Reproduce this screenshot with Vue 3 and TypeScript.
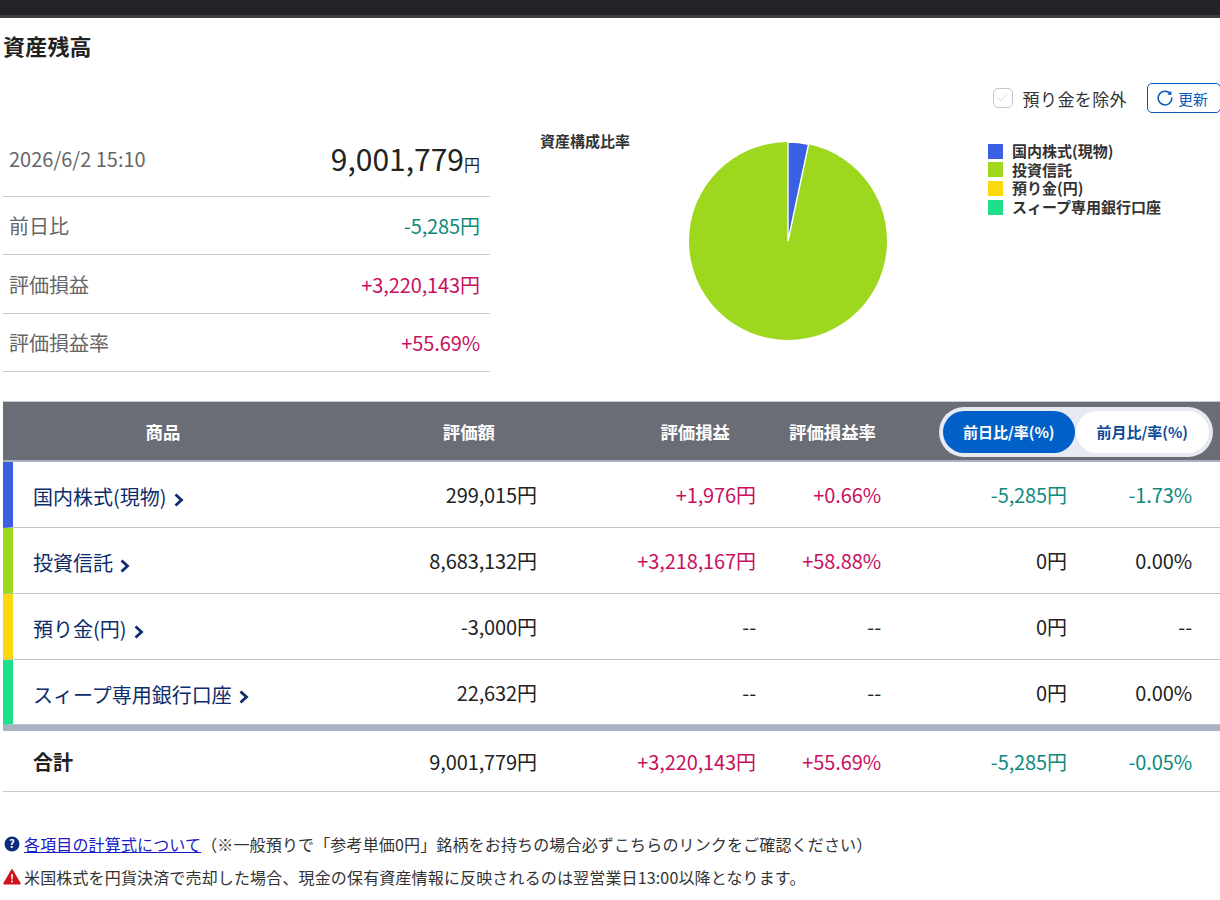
<script setup lang="ts">
import { ref } from 'vue'

type Tone = '' | 'up' | 'down'
interface Cell {
  text: string
  tone: Tone
}
interface Row {
  name: string
  color: string
  cells: Cell[]
}

const c = (text: string, tone: Tone = ''): Cell => ({ text, tone })

const excludeDeposit = ref(false)
const mode = ref<'day' | 'month'>('day')

const summary = [
  { label: '前日比', value: '-5,285円', tone: 'down' },
  { label: '評価損益', value: '+3,220,143円', tone: 'up' },
  { label: '評価損益率', value: '+55.69%', tone: 'up' },
]

const legend = [
  { name: '国内株式(現物)', color: '#3b5fe2' },
  { name: '投資信託', color: '#9dd81f' },
  { name: '預り金(円)', color: '#fcd80e' },
  { name: 'スィープ専用銀行口座', color: '#1fe08a' },
]

const rows: Row[] = [
  {
    name: '国内株式(現物)',
    color: '#3b5fe2',
    cells: [c('299,015円'), c('+1,976円', 'up'), c('+0.66%', 'up'), c('-5,285円', 'down'), c('-1.73%', 'down')],
  },
  {
    name: '投資信託',
    color: '#9dd81f',
    cells: [c('8,683,132円'), c('+3,218,167円', 'up'), c('+58.88%', 'up'), c('0円'), c('0.00%')],
  },
  {
    name: '預り金(円)',
    color: '#fcd80e',
    cells: [c('-3,000円'), c('--'), c('--'), c('0円'), c('--')],
  },
  {
    name: 'スィープ専用銀行口座',
    color: '#1fe08a',
    cells: [c('22,632円'), c('--'), c('--'), c('0円'), c('0.00%')],
  },
]

const total: Cell[] = [
  c('9,001,779円'),
  c('+3,220,143円', 'up'),
  c('+55.69%', 'up'),
  c('-5,285円', 'down'),
  c('-0.05%', 'down'),
]
</script>

<template>
  <div class="page">
    <div class="topbar"></div>
    <h1 class="title">資産残高</h1>

    <div class="tools">
      <label class="check">
        <input v-model="excludeDeposit" type="checkbox" />
        <span class="box">
          <svg width="17" height="17" viewBox="0 0 17 17" fill="none" stroke="#e6eaf2" stroke-width="1.4">
            <path d="M3.5 8.5L7 12L13.5 4.5" />
          </svg>
        </span>
        <span>預り金を除外</span>
      </label>
      <button class="refresh" type="button">
        <svg width="16" height="16" viewBox="0 0 16 16" fill="none" stroke="#0a5cb8" stroke-width="1.5">
          <path d="M13.6 4.2A6.8 6.8 0 1 0 14.8 8" stroke-linecap="round" />
          <path d="M14.3 0.8V4.8H10.3" fill="#0a5cb8" stroke="none" />
        </svg>
        更新
      </button>
    </div>

    <section class="overview">
      <div class="summary">
        <div class="sum-row sum-head">
          <span class="date">2026/6/2 15:10</span>
          <span class="amount">9,001,779<small>円</small></span>
        </div>
        <div v-for="s in summary" :key="s.label" class="sum-row">
          <span class="sum-label">{{ s.label }}</span>
          <span class="num" :class="s.tone">{{ s.value }}</span>
        </div>
      </div>

      <div class="chart">
        <p class="chart-title">資産構成比率</p>
        <svg class="pie" width="200" height="200" viewBox="0 0 200 200">
          <circle cx="100" cy="100" r="99" fill="#9dd81f" />
          <path d="M100 100L100 1A99 99 0 0 1 120.6 3.2Z" fill="#3b5fe2" stroke="#fff" stroke-width="1.4" />
        </svg>
        <ul class="legend">
          <li v-for="l in legend" :key="l.name">
            <i :style="{ background: l.color }"></i>{{ l.name }}
          </li>
        </ul>
      </div>
    </section>

    <section class="table">
      <div class="thead">
        <span class="th-name">商品</span>
        <span>評価額</span>
        <span>評価損益</span>
        <span>評価損益率</span>
        <div class="toggle">
          <button type="button" :class="{ on: mode === 'day' }" @click="mode = 'day'">前日比/率(%)</button>
          <button type="button" :class="{ on: mode === 'month' }" @click="mode = 'month'">前月比/率(%)</button>
        </div>
      </div>

      <div v-for="r in rows" :key="r.name" class="row" :style="{ borderLeftColor: r.color }">
        <a class="name" href="#">
          {{ r.name }}
          <svg width="10" height="14" viewBox="0 0 10 14" fill="none" stroke="#0d2c6b" stroke-width="2.8">
            <path d="M1.5 1.5L7.5 7L1.5 12.5" />
          </svg>
        </a>
        <span v-for="(cell, i) in r.cells" :key="i" class="num" :class="cell.tone">{{ cell.text }}</span>
      </div>

      <div class="row total">
        <span class="name">合計</span>
        <span v-for="(cell, i) in total" :key="i" class="num" :class="cell.tone">{{ cell.text }}</span>
      </div>
    </section>

    <div class="notes">
      <p>
        <svg width="16" height="16" viewBox="0 0 16 16">
          <circle cx="8" cy="8" r="7.5" fill="#0d2c7b" />
          <text x="8" y="12" text-anchor="middle" font-size="11" font-weight="700" fill="#fff">?</text>
        </svg>
        <a href="#">各項目の計算式について</a>（※一般預りで「参考単価0円」銘柄をお持ちの場合必ずこちらのリンクをご確認ください）
      </p>
      <p>
        <svg width="18" height="16" viewBox="0 0 18 16">
          <path d="M9 1L17 14.6H1Z" fill="#d0121b" stroke="#d0121b" stroke-width="1.6" stroke-linejoin="round" />
          <path d="M8.1 5H9.9L9.6 10.4H8.4Z" fill="#fff" />
          <circle cx="9" cy="12.4" r="1" fill="#fff" />
        </svg>
        米国株式を円貨決済で売却した場合、現金の保有資産情報に反映されるのは翌営業日13:00以降となります。
      </p>
    </div>
  </div>
</template>

<style>
body {
  margin: 0;
  background: #fff;
}
</style>

<style scoped>
.page {
  width: 1220px;
  height: 900px;
  overflow: hidden;
  font-family: "Noto Sans CJK JP", "Noto Sans", sans-serif;
  color: #222;
}
.topbar {
  height: 15px;
  background: #212327;
  border-bottom: 3px solid #3c3e43;
}
.title {
  margin: 11px 0 0 3px;
  font-size: 22px;
  letter-spacing: 0.2px;
  line-height: 32px;
  font-weight: 700;
}

/* 更新ボタン周り */
.tools {
  display: flex;
  justify-content: flex-end;
  align-items: center;
  height: 30px;
  margin: 22px -1px 0 0;
}
.check {
  display: flex;
  align-items: center;
  font-size: 17px;
  letter-spacing: 0.4px;
  color: #333;
}
.check input {
  display: none;
}
.box {
  display: flex;
  box-sizing: border-box;
  width: 20px;
  height: 20px;
  margin-right: 10px;
  border: 1.5px solid #c3c8d4;
  border-radius: 5px;
  background: #fff;
}
.refresh {
  display: flex;
  align-items: center;
  gap: 5px;
  box-sizing: border-box;
  width: 74px;
  height: 30px;
  margin-left: 20px;
  padding: 0 0 0 9px;
  border: 1.5px solid #0a5cb8;
  border-radius: 5px;
  background: #fff;
  color: #0a5cb8;
  font: inherit;
  font-size: 15px;
}

/* 上段 */
.overview {
  display: flex;
  height: 271px;
  padding-top: 17px;
}
.summary {
  width: 487px;
  margin-left: 3px;
  font-size: 20px;
}
.sum-row {
  display: flex;
  justify-content: space-between;
  align-items: center;
  box-sizing: border-box;
  height: 58.5px;
  padding: 1px 10px 0 6px;
  border-bottom: 1px solid #c6cad2;
}
.sum-head {
  height: 66.5px;
  padding-top: 0;
  padding-bottom: 8px;
}
.sum-label,
.date {
  color: #666;
}
.amount {
  margin-top: 4px;
  font-size: 30px;
  line-height: 36px;
}
.amount small {
  font-size: 16px;
}
.chart {
  display: flex;
  flex: 1;
  margin-left: 50px;
}
.chart-title {
  width: 148px;
  margin: 0;
  font-size: 15px;
  line-height: 22px;
  font-weight: 700;
  color: #333;
}
.pie {
  margin-top: 11px;
}
.legend {
  margin: 12px 0 0 100px;
  padding: 0;
  list-style: none;
  font-size: 15px;
  line-height: 18.6px;
  font-weight: 700;
  color: #333;
}
.legend li {
  display: flex;
  align-items: center;
  white-space: nowrap;
}
.legend i {
  width: 15px;
  height: 15px;
  margin-right: 9px;
}

/* テーブル */
.table {
  margin-left: 3px;
}
.thead {
  display: grid;
  grid-template-columns: 320px 172px 235px 146px 1fr;
  align-items: center;
  box-sizing: border-box;
  height: 61px;
  border-top: 1px solid #c9ccd3;
  border-bottom: 2px solid #aab1c2;
  background: #6a6d75;
  color: #fff;
  font-size: 17.4px;
  font-weight: 700;
  text-align: right;
}
.th-name {
  text-align: center;
}
.toggle {
  display: flex;
  justify-self: end;
  gap: 1px;
  margin: 1px 7.5px 0 0;
  padding: 4px;
  border-radius: 26px;
  background: #e8eaf1;
}
.toggle button {
  width: 132.5px;
  height: 42px;
  padding: 0;
  border: 0;
  border-radius: 21px;
  background: #fff;
  color: #0d4a9a;
  font: inherit;
  font-size: 15px;
  font-weight: 700;
}
.toggle button.on {
  background: #0060c8;
  color: #fff;
}
.row {
  display: grid;
  grid-template-columns: 310px 214px 219px 125px 186px 125px;
  align-items: center;
  box-sizing: border-box;
  height: 66px;
  padding: 0 28px 0 0;
  border-left: 10px solid transparent;
  border-bottom: 1px solid #bcc4ca;
  font-size: 20px;
}
.row:nth-child(5) {
  height: 65px;
}
.name {
  display: flex;
  align-items: center;
  gap: 7px;
  margin-left: 20px;
  padding-top: 4px;
  color: #0d2c6b;
  text-decoration: none;
  white-space: nowrap;
}
.name svg {
  margin-top: 6px;
}
.num {
  text-align: right;
  letter-spacing: -0.1px;
}
.total {
  height: 67px;
  border-left: 0;
  border-top: 6px solid #a9b1c3;
  border-bottom: 1px solid #c6c8cc;
  grid-template-columns: 320px 214px 219px 125px 186px 125px;
}
.total .name {
  margin-left: 30px;
  padding-top: 0;
  color: #222;
  font-weight: 700;
}
.up {
  color: #c8105f;
}
.down {
  color: #0e8a7d;
}

/* 注記 */
.notes {
  margin: 36px 0 0 3px;
  font-size: 16px;
  letter-spacing: 0.15px;
  color: #333;
}
.notes p {
  display: flex;
  align-items: center;
  height: 32.5px;
  margin: 0;
  white-space: nowrap;
}
.notes svg {
  flex: none;
  margin-right: 3px;
}
.notes p:first-child svg {
  margin: 0 4px 0 1px;
}
.notes a {
  color: #1a1ac8;
}
</style>
